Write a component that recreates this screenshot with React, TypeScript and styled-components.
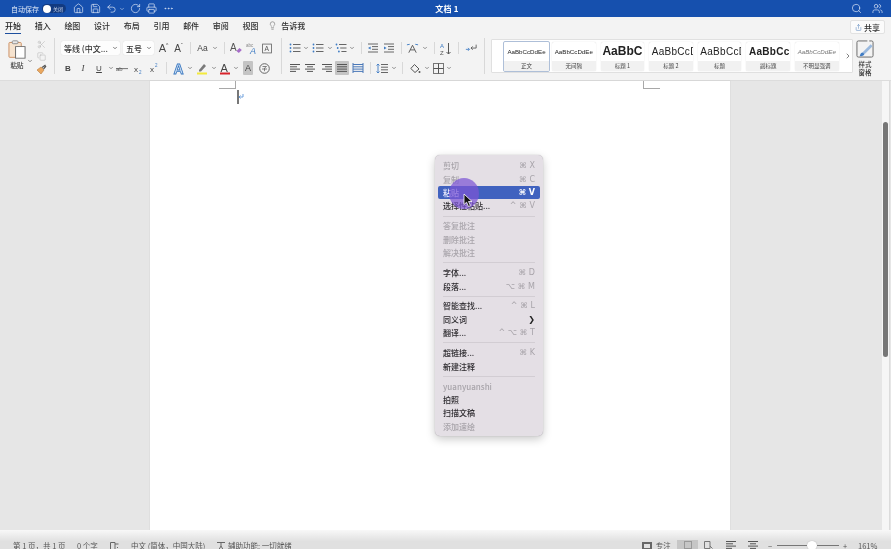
import React from "react";
import styled, { createGlobalStyle } from "styled-components";
import { Home, Save, Undo2, RotateCw, Printer, MoreHorizontal, Lightbulb, Search, Users, ChevronDown, ChevronRight, Scissors, Copy, Share } from "lucide-react";

const Global = createGlobalStyle`
  html, body { margin: 0; padding: 0; width: 891px; height: 549px; overflow: hidden; }
  body { font-family: "Noto Sans CJK SC", "Liberation Sans", sans-serif; }
  #root { width: 891px; height: 549px; }
`;

const Shell = styled.div`
  width: 891px; height: 549px; display: flex; flex-direction: column; position: relative; overflow: hidden;
  background: #e6e6e6; filter: blur(0.4px);
`;
const TitleBar = styled.header`
  height: 17px; background: #1650ae; color: #fff; display: grid; grid-template-columns: 1fr auto 1fr; align-items: center; padding: 0 8px 0 11px;
`;
const TitleLeft = styled.div`display: flex; align-items: center; color: #dfe8f7;`;
const AutoLabel = styled.span`font-size: 7px; font-weight: 500; width: 31px; opacity: .85;`;
const Toggle = styled.span`
  width: 24px; height: 9px; border-radius: 5px; background: #123a80; display: flex; align-items: center; gap: 2px; padding-left: 1px; margin-right: 5px; box-sizing: border-box;
  font-size: 5px; color: #cfd9ec;
  &::before { content: ""; width: 8px; height: 8px; background: #fff; border-radius: 50%; }
`;
const QuickIcon = styled.span<{ $w: number }>`width: ${p => p.$w}px; display: flex; align-items: center; justify-content: center;`;
const DocTitle = styled.div`font-size: 8px; font-weight: 700; letter-spacing: .2px;`;
const TitleRight = styled.div`display: flex; justify-content: flex-end; align-items: center; gap: 10px;`;

const TabRow = styled.nav`
  height: 18px; background: #f3f3f3; display: flex; align-items: center; gap: 13.7px; padding: 0 6px 0 5px; position: relative;
`;
const Tab = styled.span<{ $on?: boolean }>`
  width: 16px; font-size: 8px; font-weight: 500; line-height: 13px; height: 15px; box-sizing: border-box; white-space: nowrap; color: ${p => p.$on ? "#1a1a1a" : "#2f2f2f"};
  border-bottom: ${p => p.$on ? "1.5px solid #1d4f9e" : "1.5px solid transparent"}; margin-top: 1px;
`;
const Tell = styled.span`display: flex; align-items: center; gap: 4px; font-size: 8px; font-weight: 500; color: #2f2f2f; margin-left: -4px; margin-top: -1px;`;
const ShareBtn = styled.button`
  margin-left: auto; width: 35px; height: 14px; border: 1px solid #e2e2e2; background: #fbfbfb; border-radius: 2px; display: flex; align-items: center; justify-content: center; gap: 2px;
  font: 500 8px "Noto Sans CJK SC", sans-serif; color: #333; padding: 0; margin-top: 2px;
`;

const Ribbon = styled.section`
  height: 45px; background: #f3f3f3; display: flex; border-bottom: 1px solid #dcdcdc; box-sizing: content-box; padding-left: 7px;
`;
const PasteGroup = styled.div`width: 47px; display: grid; grid-template-columns: 20px 5px 18px; grid-template-rows: 1fr; position: relative;`;
const PasteMain = styled.div`display: flex; flex-direction: column; align-items: center; padding-top: 5px;`;
const PasteLabel = styled.span`font-size: 6.5px; color: #333; line-height: 9px; margin-top: 2px; font-weight: 500;`;
const PasteCaret = styled.div`padding-top: 10px; color: #555;`;
const PasteSide = styled.div`display: flex; flex-direction: column; align-items: center; gap: 3px; padding-top: 5px; color: #aaa;`;
const RibbonDivider = styled.div`width: 1px; margin: 3px 0 6px; background: #d8d8d8; flex: none;`;
const ToolGroup = styled.div<{ $w: number; $pl: number }>`
  width: ${p => p.$w}px; padding-left: ${p => p.$pl}px; box-sizing: border-box; display: flex; flex-direction: column; padding-top: 6px; gap: 6px;
`;
const ToolRow = styled.div`display: flex; align-items: center; height: 14px;`;
const Select = styled.div<{ $w: number }>`
  width: ${p => p.$w}px; height: 14px; background: #fdfdfd; border-radius: 2px; margin-right: 3px; box-sizing: border-box; padding: 0 2px 0 3px;
  display: flex; align-items: center; justify-content: space-between; font-size: 8px; font-weight: 500; color: #333; white-space: nowrap; box-shadow: 0 0 1px #ccc;
`;
const Tool = styled.span<{ $w: number; $ml?: number; $on?: boolean; $c?: string; $s?: number; $b?: number; $i?: boolean; $serif?: boolean }>`
  width: ${p => p.$w}px; height: 14px; margin-left: ${p => p.$ml ?? 0}px; flex: none; display: flex; align-items: center; justify-content: center; color: ${p => p.$c ?? "#444"};
  font-family: ${p => p.$serif ? '"Liberation Serif", serif' : '"Liberation Sans", sans-serif'};
  font-size: ${p => p.$s ?? 8}px; font-weight: ${p => p.$b ?? 400}; font-style: ${p => p.$i ? "italic" : "normal"};
  background: ${p => p.$on ? "#c4c4c4" : "transparent"}; border-radius: 1px; white-space: nowrap;
`;
const Tiny = styled.span`font-size: 5px; align-self: flex-start; margin-top: 1px;`;
const Sep = styled.span<{ $m?: number }>`width: 1px; height: 12px; background: #d8d8d8; margin: 0 ${p => p.$m ?? 3}px; flex: none;`;
const Caret = () => <Tool $w={8}><ChevronDown size={6} strokeWidth={2.5} color="#555" /></Tool>;

const Gallery = styled.div`
  width: 362px; height: 34px; margin: 4px 0 0 6px; background: #fff; border: 1px solid #e0e0e0; box-sizing: border-box; display: flex; align-items: center; padding-left: 11px; gap: 5px; border-radius: 1px; flex: none;
`;
const StyleCard = styled.div<{ $sel?: boolean }>`
  width: ${p => p.$sel ? 47 : 43.6}px; height: ${p => p.$sel ? 31 : 29}px; flex: none; box-sizing: border-box; display: flex; flex-direction: column; overflow: hidden; background: #fff;
  border: ${p => p.$sel ? "1.5px solid #aebfd8" : "0"}; border-radius: 2px; margin-right: ${p => p.$sel ? -3 : 0}px; box-shadow: ${p => p.$sel ? "none" : "0 0 1px #ccc"};
`;
const Sample = styled.div<{ $s: number; $b?: number; $i?: boolean; $c?: string; $left?: boolean }>`
  flex: 1; display: flex; align-items: center; justify-content: ${p => p.$left ? "flex-start" : "center"}; padding-left: ${p => p.$left ? 2.5 : 0}px; overflow: hidden; white-space: nowrap; font-family: "Liberation Sans", sans-serif;
  letter-spacing: ${p => p.$left ? .3 : 0}px;
  font-size: ${p => p.$s}px; font-weight: ${p => p.$b ?? 400}; font-style: ${p => p.$i ? "italic" : "normal"}; color: ${p => p.$c ?? "#222"};
`;
const SampleLabel = styled.div`height: 10px; line-height: 10px; background: #f1f1f1; text-align: center; font-size: 5.5px; color: #444; white-space: nowrap;`;
const GalleryNext = styled.div`color: #444; display: flex; margin-left: 0;`;
const Pane = styled.div`width: 24px; display: flex; flex-direction: column; align-items: center; padding: 5px 0 0 0; font-size: 6.5px; line-height: 7.5px; color: #333; text-align: center; font-weight: 500; gap: 3px; flex: none;`;

const DocArea = styled.main`flex: 1; display: flex; min-height: 0; background: #e6e6e6; padding-left: 150px;`;
const Page = styled.div`width: 580px; background: #fff; position: relative; box-shadow: 0 0 1px #bbb; height: 449px;`;
const CropMark = styled.span<{ $side: "l" | "r" }>`
  position: absolute; top: 0; width: 17px; height: 8px; box-sizing: border-box; border-bottom: 1.5px solid #a8a8a8;
  ${p => p.$side === "l" ? "left: 69px; border-right: 1.5px solid #a8a8a8;" : "left: 493px; border-left: 1.5px solid #a8a8a8;"}
`;
const TextCaret = styled.span`position: absolute; left: 87px; top: 9px; width: 1.5px; height: 14px; background: #777;`;
const ParaMark = styled.svg`position: absolute; left: 88px; top: 12px;`;
const ScrollTrack = styled.div`width: 8px; margin-left: 152px; background: #f6f6f6; border-right: 1px solid #dcdcdc; padding: 41px 2px 0 2px; box-sizing: border-box; height: 449px; display: flex; justify-content: center;`;
const ScrollThumb = styled.div`width: 4.5px; height: 235px; background: #777; border-radius: 3px; flex: none;`;

const StatusBar = styled.footer`
  height: 19px; background: linear-gradient(#f8f8f8 0, #e0e0e0 60%); display: flex; align-items: flex-end; padding: 0 0 0 13px; font-size: 7.5px; color: #555; white-space: nowrap; position: relative;
`;
const StatusItem = styled.span<{ $w: number; $center?: boolean; $ml?: number }>`
  width: ${p => p.$w}px; margin-left: ${p => p.$ml ?? 0}px; flex: none; height: 13px; line-height: 13px; margin-bottom: -3px; display: flex; align-items: center; gap: 2px;
  justify-content: ${p => p.$center ? "center" : "flex-start"};
`;
const ViewBtn = styled.span<{ $on?: boolean; $w?: number }>`width: ${p => p.$w ?? 21}px; height: 9px; flex: none; display: flex; align-items: center; justify-content: center; background: ${p => p.$on ? "#c6c6c6" : "transparent"}; color: #666;`;
const Slider = styled.span`width: 62px; height: 1.5px; background: #777; position: relative; margin: 0 0 3px; flex: none;
  &::after { content: ""; position: absolute; left: 30px; top: -4px; width: 10px; height: 9.5px; background: #fff; border-radius: 50%; box-shadow: 0 0 1px #999; }
`;

const Menu = styled.div`
  position: absolute; left: 435px; top: 155px; width: 108px; height: 281px; box-sizing: border-box; padding: 4px 3px; background: #e4dfe5; border-radius: 5px;
  box-shadow: 0 0 1px #9a959c, 0 3px 10px rgba(0,0,0,.22); font-size: 8px; z-index: 5;
`;
const MenuItem = styled.div<{ $dim?: boolean; $hot?: boolean }>`
  height: 13.4px; display: flex; align-items: center; justify-content: space-between; padding: 0 5px; border-radius: 2px; white-space: nowrap; font-weight: 500;
  color: ${p => p.$hot ? "#f0f0ff" : p.$dim ? "#a8a4aa" : "#2c2a2e"}; background: ${p => p.$hot ? "#4062bf" : "transparent"};
`;
const Key = styled.span<{ $hot?: boolean; $strong?: boolean }>`font-family: "DejaVu Sans", "Liberation Sans", sans-serif; font-size: 8px; font-weight: ${p => p.$hot ? 700 : 400}; color: ${p => p.$hot ? "#fff" : p.$strong ? "#222" : "#a8a4aa"};`;
const MenuSep = styled.div`height: 1px; background: #d2cdd3; margin: 3px 5px 2.6px;`;
const Spot = styled.span`position: absolute; left: 449px; top: 178px; width: 30px; height: 31px; border-radius: 50%; background: rgba(124,84,212,.72); z-index: 6;`;
const Arrow = styled.svg`position: absolute; left: 463px; top: 193px; z-index: 7;`;

const I = { size: 11, strokeWidth: 1.5 };
const tabs = ["绘图", "设计", "布局", "引用", "邮件", "审阅", "视图"];

const Lines = ({ kind }: { kind: "l" | "c" | "r" | "j" | "d" }) => {
  const rows = kind === "l" ? [[1, 11], [1, 8], [1, 11], [1, 7]] : kind === "c" ? [[1, 11], [3, 9], [1, 11], [3, 9]] : kind === "r" ? [[1, 11], [4, 11], [1, 11], [5, 11]] : [[1, 11], [1, 11], [1, 11], [1, 11]];
  return (
    <svg width="12" height="10" viewBox="0 0 12 10" fill="none" stroke={kind === "d" ? "#4a78b8" : "#555"} strokeWidth="1">
      {rows.map(([a, b], i) => <path key={i} d={`M${a} ${1.5 + i * 2.3}H${b}`} />)}
      {kind === "d" && <path d="M1 0v10M11 0v10" />}
    </svg>
  );
};
const ListIcon = ({ variant }: { variant: number }) => (
  <svg width="12" height="10" viewBox="0 0 12 10" fill="none" strokeWidth="1">
    {[1.5, 5, 8.5].map((y, i) => (
      <g key={y}>
        <circle cx={variant === 2 ? 1.5 + i * 1.2 : 1.5} cy={y} r=".9" fill="#3f7cc4" />
        <path d={`M${variant === 2 ? 4 + i * 1.2 : 4} ${y}H11.5`} stroke="#666" />
      </g>
    ))}
  </svg>
);
const IndentIcon = ({ flip }: { flip?: boolean }) => (
  <svg width="12" height="10" viewBox="0 0 12 10" fill="none" stroke="#666">
    <path d="M1 1H11M5 3.6H11M5 6.3H11M1 9H11" />
    <path d={flip ? "M1 3.4L3.6 5L1 6.6Z" : "M3.6 3.4L1 5L3.6 6.6Z"} fill="#3f7cc4" stroke="none" />
  </svg>
);
const ClipIcon = () => (
  <svg width="18" height="19" viewBox="0 0 19 23" fill="none" preserveAspectRatio="none">
    <rect x="1" y="3" width="13" height="18" rx="1" fill="#f6e3cf" stroke="#c98a5a" />
    <rect x="4.5" y="1" width="6" height="3.5" rx="1" fill="#e9e9e9" stroke="#888" />
    <rect x="8" y="8" width="10" height="14" fill="#fff" stroke="#666" />
  </svg>
);
const BrushIcon = () => (
  <svg width="11" height="11" viewBox="0 0 11 11">
    <path d="M1 6L5 3L8 6L5 10Z" fill="#eaa75f" stroke="#b57a3c" strokeWidth=".6" />
    <path d="M6 3.5L9.5 1M7.5 5L10 2" stroke="#555" strokeWidth="1.2" />
  </svg>
);
const FormatIcon = () => (
  <svg width="12" height="12" viewBox="0 0 12 12">
    <text x="0" y="9" fontSize="10" fill="#555" fontFamily="Liberation Sans">A</text>
    <path d="M6.5 9L9.5 6L11.8 8L8.8 11Z" fill="#a66cc8" />
  </svg>
);
const AbcIcon = () => (
  <svg width="12" height="12" viewBox="0 0 12 12">
    <text x="0" y="4.5" fontSize="4.5" fill="#888" fontFamily="Liberation Sans">abc</text>
    <text x="4" y="11.5" fontSize="9" fontStyle="italic" fill="#3f7cc4" fontFamily="Liberation Sans">A</text>
  </svg>
);
const BoxA = () => (
  <svg width="11" height="11" viewBox="0 0 12 12">
    <rect x=".7" y=".7" width="10.6" height="10.6" fill="none" stroke="#666" />
    <text x="3" y="9" fontSize="8" fill="#555" fontFamily="Liberation Sans">A</text>
  </svg>
);
const ColorA = ({ c, pen }: { c: string; pen?: boolean }) => (
  <svg width="12" height="13" viewBox="0 0 12 13">
    {pen
      ? <path d="M3 8L8 2L10 4L5 9.5H3Z" fill="#7a7a7a" />
      : <text x="1.5" y="9.5" fontSize="11" fill="#444" fontFamily="Liberation Sans">A</text>}
    <rect x="1" y="10.5" width="10" height="2" fill={c} />
  </svg>
);
const OutlineA = () => (
  <svg width="13" height="13" viewBox="0 0 13 13">
    <text x="0.5" y="11.5" fontSize="14" fill="#cfe0f3" stroke="#3a78c0" strokeWidth=".8" fontFamily="Liberation Sans" fontWeight="700">A</text>
  </svg>
);
const RubyIcon = () => (
  <svg width="11" height="11" viewBox="0 0 11 11" fill="none" stroke="#666">
    <circle cx="5.5" cy="5.5" r="4.8" />
    <path d="M3.5 3.5H7.5L5.5 5V8.2M3 6H8" strokeWidth=".8" />
  </svg>
);
const Strike = () => (
  <svg width="12" height="9" viewBox="0 0 12 9">
    <text x="0" y="7" fontSize="6" fill="#555" fontFamily="Liberation Sans">ab</text>
    <path d="M0 4.6H12" stroke="#555" strokeWidth=".8" />
  </svg>
);
const Script = ({ up }: { up?: boolean }) => (
  <svg width="11" height="11" viewBox="0 0 11 11">
    <text x="1" y="9" fontSize="8" fill="#444" fontFamily="Liberation Sans">x</text>
    <text x="6" y={up ? 4 : 10.5} fontSize="4.5" fill="#3f7cc4" fontFamily="Liberation Sans">2</text>
  </svg>
);
const AsianIcon = () => (
  <svg width="13" height="11" viewBox="0 0 14 11" fill="none" stroke="#555">
    <path d="M1 1.5L4 1M13 1.5L10 1" stroke="#3f7cc4" />
    <path d="M7 2L3 10M7 2L11 10M4.6 7H9.4" />
  </svg>
);
const SortIcon = () => (
  <svg width="12" height="13" viewBox="0 0 12 13" fill="none">
    <text x="0" y="6" fontSize="6" fill="#3f7cc4" fontFamily="Liberation Sans">A</text>
    <text x="0" y="12.5" fontSize="6" fill="#555" fontFamily="Liberation Sans">Z</text>
    <path d="M8.5 1V12M6.5 10L8.5 12L10.5 10" stroke="#555" />
  </svg>
);
const ParaIcon = () => (
  <svg width="12" height="11" viewBox="0 0 14 11" fill="none">
    <path d="M13 1V5H7M9 3L7 5L9 7" stroke="#555" />
    <path d="M1 6.5H5M3.5 4.8L5.2 6.5L3.5 8.2" stroke="#3f7cc4" />
  </svg>
);
const SpacingIcon = () => (
  <svg width="12" height="11" viewBox="0 0 12 11" fill="none">
    <path d="M5 1.5H12M5 4.2H12M5 6.8H12M5 9.5H12" stroke="#666" />
    <path d="M2 1V10M.5 2.5L2 1L3.5 2.5M.5 8.5L2 10L3.5 8.5" stroke="#3f7cc4" strokeWidth=".9" />
  </svg>
);
const FillIcon = () => (
  <svg width="12" height="11" viewBox="0 0 12 11" fill="none" stroke="#555">
    <path d="M5.5 1.5L10 6L6 9.5L1.8 5.5Z" />
    <circle cx="10.5" cy="9" r="1" fill="#555" stroke="none" />
  </svg>
);
const BorderIcon = () => (
  <svg width="11" height="11" viewBox="0 0 11 11" fill="none" stroke="#777">
    <rect x=".5" y=".5" width="10" height="10" />
    <path d="M5.5 .5V10.5M.5 5.5H10.5" stroke="#555" />
  </svg>
);
const PaneIcon = () => (
  <svg width="18" height="18" viewBox="0 0 19 19" fill="none">
    <path d="M12 1H2.5A1.5 1.5 0 0 0 1 2.5V16.5A1.5 1.5 0 0 0 2.5 18H16.5A1.5 1.5 0 0 0 18 16.5V2.5A1.5 1.5 0 0 0 16.5 1H14" stroke="#666" />
    <path d="M7 13L15.5 4.5L17.5 6.5L9 15Z" fill="#9ab9de" />
    <path d="M4 17C4.5 14 6 13 7.3 13.2L8.8 14.8C8.5 16.5 6.5 17.3 4 17Z" fill="#3f7cc4" />
  </svg>
);

export default function App() {
  return (
    <>
      <Global />
      <Shell>
        <TitleBar>
          <TitleLeft>
            <AutoLabel>自动保存</AutoLabel>
            <Toggle>关闭</Toggle>
            <QuickIcon $w={14}><Home {...I} /></QuickIcon>
            <QuickIcon $w={20}><Save {...I} /></QuickIcon>
            <QuickIcon $w={13}><Undo2 {...I} /></QuickIcon>
            <QuickIcon $w={8}><ChevronDown size={6} strokeWidth={2} /></QuickIcon>
            <QuickIcon $w={18}><RotateCw {...I} /></QuickIcon>
            <QuickIcon $w={14}><Printer {...I} /></QuickIcon>
            <QuickIcon $w={20}><MoreHorizontal {...I} /></QuickIcon>
          </TitleLeft>
          <DocTitle>文档 1</DocTitle>
          <TitleRight>
            <Search {...I} color="#dfe8f7" />
            <Users {...I} color="#dfe8f7" />
          </TitleRight>
        </TitleBar>

        <TabRow>
          <Tab $on>开始</Tab>
          <Tab>插入</Tab>
          {tabs.map(t => <Tab key={t}>{t}</Tab>)}
          <Tell><Lightbulb size={9} strokeWidth={1.3} color="#555" />告诉我</Tell>
          <ShareBtn><Share size={7} strokeWidth={1.5} color="#3a6fb0" />共享</ShareBtn>
        </TabRow>

        <Ribbon>
          <PasteGroup>
            <PasteMain><ClipIcon /><PasteLabel>粘贴</PasteLabel></PasteMain>
            <PasteCaret><ChevronDown size={6} strokeWidth={2.5} /></PasteCaret>
            <PasteSide><Scissors size={9} strokeWidth={1.2} /><Copy size={9} strokeWidth={1.2} /><BrushIcon /></PasteSide>
          </PasteGroup>
          <RibbonDivider />
          <ToolGroup $w={226} $pl={6}>
            <ToolRow>
              <Select $w={59}>等线 (中文...<ChevronDown size={6} strokeWidth={2.5} /></Select>
              <Select $w={31}>五号<ChevronDown size={6} strokeWidth={2.5} /></Select>
              <Tool $w={13} $s={11}>A<Tiny>^</Tiny></Tool>
              <Tool $w={17} $s={10}>A<Tiny>ˇ</Tiny></Tool>
              <Sep $m={3} />
              <Tool $w={17} $s={8.5}>Aa</Tool>
              <Caret />
              <Sep $m={5} />
              <Tool $w={12}><FormatIcon /></Tool>
              <Tool $w={20}><AbcIcon /></Tool>
              <Tool $w={10}><BoxA /></Tool>
            </ToolRow>
            <ToolRow>
              <Tool $w={14} $b={700}>B</Tool>
              <Tool $w={16} $i $serif $s={9}>I</Tool>
              <Tool $w={16} $s={8}><u>U</u></Tool>
              <Caret />
              <Tool $w={14}><Strike /></Tool>
              <Tool $w={18}><Script /></Tool>
              <Tool $w={14}><Script up /></Tool>
              <Sep $m={5} />
              <Tool $w={14}><OutlineA /></Tool>
              <Caret />
              <Tool $w={16}><ColorA c="#f4ea3c" pen /></Tool>
              <Caret />
              <Tool $w={14}><ColorA c="#d8232a" /></Tool>
              <Caret />
              <Tool $w={10} $ml={3} $on $s={9}>A</Tool>
              <Tool $w={22}><RubyIcon /></Tool>
            </ToolRow>
          </ToolGroup>
          <RibbonDivider />
          <ToolGroup $w={202} $pl={6}>
            <ToolRow>
              <Tool $w={14}><ListIcon variant={0} /></Tool>
              <Caret />
              <Tool $w={16}><ListIcon variant={1} /></Tool>
              <Caret />
              <Tool $w={14}><ListIcon variant={2} /></Tool>
              <Caret />
              <Sep $m={5} />
              <Tool $w={12}><IndentIcon /></Tool>
              <Tool $w={20}><IndentIcon flip /></Tool>
              <Sep $m={2} />
              <Tool $w={17}><AsianIcon /></Tool>
              <Caret />
              <Sep $m={5} />
              <Tool $w={12}><SortIcon /></Tool>
              <Sep $m={6} />
              <Tool $w={12}><ParaIcon /></Tool>
            </ToolRow>
            <ToolRow>
              <Tool $w={14}><Lines kind="l" /></Tool>
              <Tool $w={16}><Lines kind="c" /></Tool>
              <Tool $w={17}><Lines kind="r" /></Tool>
              <Tool $w={14} $on><Lines kind="j" /></Tool>
              <Tool $w={18}><Lines kind="d" /></Tool>
              <Sep $m={3} />
              <Tool $w={16}><SpacingIcon /></Tool>
              <Caret />
              <Sep $m={4} />
              <Tool $w={16}><FillIcon /></Tool>
              <Caret />
              <Tool $w={14}><BorderIcon /></Tool>
              <Caret />
            </ToolRow>
          </ToolGroup>
          <RibbonDivider />
          <Gallery>
            <StyleCard $sel><Sample $s={6.2}>AaBbCcDdEe</Sample><SampleLabel>正文</SampleLabel></StyleCard>
            <StyleCard><Sample $s={6.2}>AaBbCcDdEe</Sample><SampleLabel>无间隔</SampleLabel></StyleCard>
            <StyleCard><Sample $s={12} $b={700}>AaBbC</Sample><SampleLabel>标题 1</SampleLabel></StyleCard>
            <StyleCard><Sample $s={10} $left>AaBbCcD</Sample><SampleLabel>标题 2</SampleLabel></StyleCard>
            <StyleCard><Sample $s={10} $left>AaBbCcD</Sample><SampleLabel>标题</SampleLabel></StyleCard>
            <StyleCard><Sample $s={10} $b={700} $left>AaBbCcD</Sample><SampleLabel>副标题</SampleLabel></StyleCard>
            <StyleCard><Sample $s={6.2} $i $c="#777">AaBbCcDdEe</Sample><SampleLabel>不明显强调</SampleLabel></StyleCard>
            <GalleryNext><ChevronRight size={8} strokeWidth={2} /></GalleryNext>
          </Gallery>
          <Pane><PaneIcon /><span>样式<br />窗格</span></Pane>
        </Ribbon>

        <DocArea>
          <Page>
            <CropMark $side="l" />
            <CropMark $side="r" />
            <TextCaret />
            <ParaMark width="6" height="7" viewBox="0 0 6 7" fill="none" stroke="#6ea0dc" strokeWidth="1"><path d="M5 1V4H1M2.5 2.5L1 4L2.5 5.5" /></ParaMark>
          </Page>
          <ScrollTrack><ScrollThumb /></ScrollTrack>
        </DocArea>

        <StatusBar>
          <StatusItem $w={64}>第 1 页，共 1 页</StatusItem>
          <StatusItem $w={33}>0 个字</StatusItem>
          <StatusItem $w={21}>
            <svg width="9" height="8" viewBox="0 0 9 8" fill="none" stroke="#666"><path d="M.5 .5H5V7.5H.5ZM5 2H8.5M7 5L8 6" /></svg>
          </StatusItem>
          <StatusItem $w={85}>中文 (简体，中国大陆)</StatusItem>
          <StatusItem $w={426}>
            <svg width="10" height="9" viewBox="0 0 10 9" fill="none" stroke="#666"><path d="M1 1.5H9M5 1.5V5M5 5L3 8.5M5 5L7 8.5" /></svg>
            辅助功能: 一切就绪
          </StatusItem>
          <StatusItem $w={35}>
            <svg width="10" height="8" viewBox="0 0 10 8" fill="#666"><path d="M0 0H10V8H0ZM2 2V6H8V2Z" fillRule="evenodd" /></svg>
            &nbsp;专注
          </StatusItem>
          <ViewBtn $on><svg width="8" height="8" viewBox="0 0 8 8" fill="none" stroke="#999"><rect x=".5" y=".5" width="7" height="7" /></svg></ViewBtn>
          <ViewBtn><svg width="9" height="8" viewBox="0 0 9 8" fill="none" stroke="#777"><path d="M.5 .5H6V7.5H.5ZM6 5L8.5 7.5" /></svg></ViewBtn>
          <ViewBtn $w={24}><Lines kind="l" /></ViewBtn>
          <ViewBtn $w={20}><Lines kind="c" /></ViewBtn>
          <StatusItem $w={14} $center>−</StatusItem>
          <Slider />
          <StatusItem $w={12} $center>+</StatusItem>
          <StatusItem $w={24} $ml={7}>161%</StatusItem>
        </StatusBar>

        <Menu>
          <MenuItem $dim>剪切<Key>⌘ X</Key></MenuItem>
          <MenuItem $dim>复制<Key>⌘ C</Key></MenuItem>
          <MenuItem $hot>粘贴<Key $hot>⌘ V</Key></MenuItem>
          <MenuItem>选择性粘贴...<Key>^ ⌘ V</Key></MenuItem>
          <MenuSep />
          <MenuItem $dim>答复批注</MenuItem>
          <MenuItem $dim>删除批注</MenuItem>
          <MenuItem $dim>解决批注</MenuItem>
          <MenuSep />
          <MenuItem>字体...<Key>⌘ D</Key></MenuItem>
          <MenuItem>段落...<Key>⌥ ⌘ M</Key></MenuItem>
          <MenuSep />
          <MenuItem>智能查找...<Key>^ ⌘ L</Key></MenuItem>
          <MenuItem>同义词<Key $strong>❯</Key></MenuItem>
          <MenuItem>翻译...<Key>^ ⌥ ⌘ T</Key></MenuItem>
          <MenuSep />
          <MenuItem>超链接...<Key>⌘ K</Key></MenuItem>
          <MenuItem>新建注释</MenuItem>
          <MenuSep />
          <MenuItem $dim>yuanyuanshi</MenuItem>
          <MenuItem>拍照</MenuItem>
          <MenuItem>扫描文稿</MenuItem>
          <MenuItem $dim>添加速绘</MenuItem>
        </Menu>
        <Spot />
        <Arrow width="10" height="15" viewBox="0 0 10 15"><path d="M1 1V11.5L3.6 9.2L5.5 13.5L7.4 12.6L5.5 8.5H9Z" fill="#111" stroke="#fff" strokeWidth=".8" /></Arrow>
      </Shell>
    </>
  );
}
